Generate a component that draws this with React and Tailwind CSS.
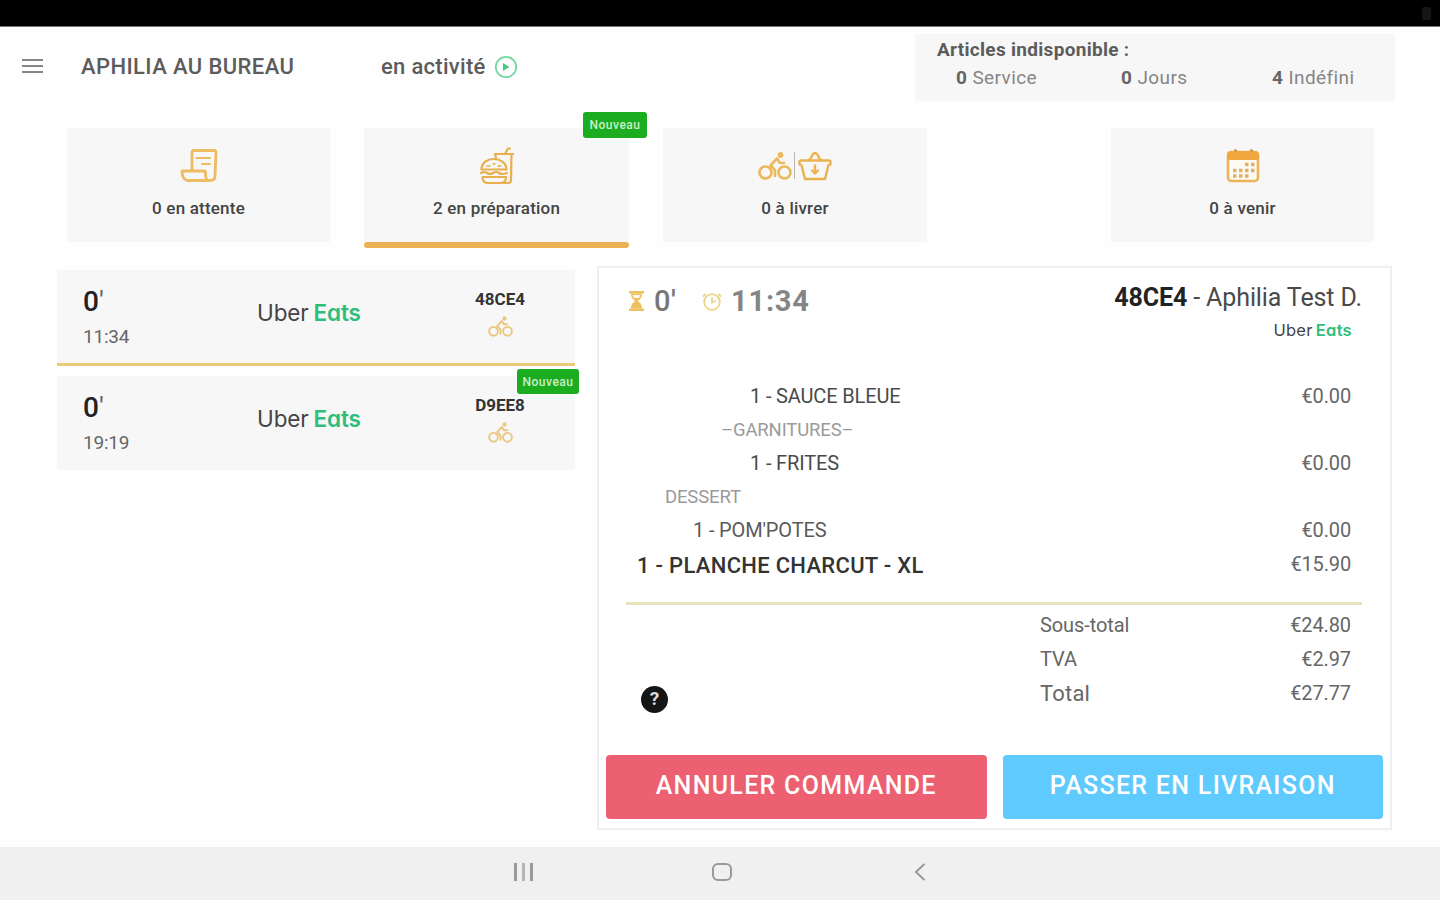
import { useState } from 'react';

const tabs = [
  { id: 'waiting', label: '0 en attente', icon: ScrollIcon, className: 'ml-[67px] w-[263px]' },
  { id: 'preparing', label: '2 en préparation', icon: BurgerIcon, className: 'ml-[34px] w-[265px]', isNew: true },
  { id: 'delivering', label: '0 à livrer', icon: DeliverIcon, className: 'ml-[34px] w-[264px]' },
  { id: 'coming', label: '0 à venir', icon: CalendarIcon, className: 'ml-[184px] w-[263px]' },
];

const orders = [
  { id: '48CE4', time: '11:34' },
  { id: 'D9EE8', time: '19:19', isNew: true },
];

const lines = [
  { text: '1 - SAUCE BLEUE', price: '€0.00', className: 'pl-[151px] text-[#4a4a4a]' },
  { text: '–GARNITURES–', className: 'pl-[122px] text-[18.500px] text-[#9a9a9a]' },
  { text: '1 - FRITES', price: '€0.00', className: 'pl-[151px] text-[#4a4a4a]' },
  { text: 'DESSERT', className: 'pl-[66px] text-[18.500px] text-[#9a9a9a]' },
  { text: "1 - POM'POTES", price: '€0.00', className: 'pl-[94px] text-[#5a5a5a]' },
];

function ScrollIcon() {
  return (
    <svg width="38" height="34" viewBox="0 0 38 34" fill="none" stroke="#edbb62" strokeWidth="2.8" strokeLinejoin="round" strokeLinecap="round">
      <path d="M12 21V3.500Q12 1.500 14 1.500H34Q36 1.500 36 4L35 27Q35 31.500 30 31.500H7Q2 30 2 22H24Q25.500 22 25.500 24Q25 29 28 31.500" />
      <path d="M16.500 9H30M22 15H30" strokeWidth="2.200" />
    </svg>
  );
}

function BurgerIcon() {
  return (
    <svg width="36" height="38" viewBox="0 0 36 38" fill="none" stroke="#e9af4c" strokeWidth="2.200" strokeLinejoin="round" strokeLinecap="round">
      <path d="M2.500 22.500C2.500 8.500 27 8.500 27.500 22.500Z" />
      <path d="M2 26Q5 24 8 26T14 26T20 26T28 26" />
      <path d="M3.500 30H27Q27 36 22 36H9Q3.500 36 3.500 30Z" />
      <path d="M17 11L16 7H34M32.500 7L32 33Q32 36 29 36H25M26 7L29 1.500H31" />
      <path d="M8 19H11M14 17H16M19 19H22" strokeWidth="1.600" />
    </svg>
  );
}

function BikeIcon({ width, height, strokeWidth = 2.6, color = '#ecb85c' }) {
  return (
    <svg width={width} height={height} viewBox="0 0 34 28" fill="none" stroke={color} strokeWidth={strokeWidth} strokeLinejoin="round" strokeLinecap="round">
      <circle cx="7.500" cy="20.500" r="6" />
      <circle cx="26.500" cy="20.500" r="6" />
      <path d="M17 24V18L12.500 13.500L19 6.500L22 11H26" />
      <circle cx="22.500" cy="3" r="1.600" />
    </svg>
  );
}

function BasketIcon() {
  return (
    <svg width="34" height="30" viewBox="0 0 34 30" fill="none" stroke="#ecb252" strokeWidth="2.400" strokeLinejoin="round" strokeLinecap="round">
      <path d="M3.500 14L7 28H27L30.500 14" />
      <path d="M1.500 13.500V11Q1.500 9.500 3 9.500H31Q32.500 9.500 32.500 11V13.500" />
      <path d="M10.500 9Q13 8 14 4.500Q17 -0.500 20 4.500Q21 8 23.500 9" />
      <path d="M17 14.500V22M14 19.500L17 22.500L20 19.500" />
    </svg>
  );
}

function DeliverIcon() {
  return (
    <div className="flex items-center">
      <BikeIcon width={34} height={28} />
      <div className="mr-[3px] ml-[2px] h-[27px] w-px bg-[#b5b5b5]" />
      <BasketIcon />
    </div>
  );
}

function CalendarIcon() {
  return (
    <svg width="34" height="34" viewBox="0 0 34 34" fill="none">
      <rect x="2" y="3" width="30" height="29" rx="3.500" fill="#fdfaf3" stroke="#edb559" strokeWidth="2.600" />
      <path d="M1 11V6Q1 2 5 2H29Q33 2 33 6V11Z" fill="#f1a640" />
      <path d="M8 1.500H11M24 1.500H27" stroke="#c99548" strokeWidth="2" />
      <path d="M19 15.500H29M19 21.500H29M7 21.500H17M7 27H23" stroke="#dfb267" strokeWidth="3.500" strokeDasharray="3.500 2.500" />
    </svg>
  );
}

function NewBadge({ className }) {
  return (
    <span className={`absolute flex items-center justify-center rounded-[3px] bg-[#1bac1f] text-[12px] font-medium tracking-[0.500px] text-[#c9f0c9] ${className}`}>
      Nouveau
    </span>
  );
}

function UberEats({ className }) {
  return (
    <span className={`font-['Inter','Liberation_Sans',sans-serif] leading-none whitespace-nowrap [font-feature-settings:'cv11'] ${className}`}>
      <span className="text-[#444]">Uber</span> <span className="font-semibold text-[#2fbd7c]">Eats</span>
    </span>
  );
}

function Header() {
  return (
    <header className="flex h-[74px] shrink-0 items-start text-[#5c5c5c]">
      <div className="mt-[32px] ml-[22px] flex w-[21px] flex-col gap-[4px]">
        <div className="h-[2px] bg-[#858585]" />
        <div className="h-[2px] bg-[#858585]" />
        <div className="h-[2px] bg-[#858585]" />
      </div>
      <h1 className="mt-[26px] ml-[38px] w-[300px] text-[22px] leading-[28px] font-medium tracking-[0.400px]">APHILIA AU BUREAU</h1>
      <div className="mt-[26px] flex w-[534px] items-center gap-[8px] text-[22px] leading-[28px] font-medium tracking-[0.300px]">
        en activité
        <svg width="24" height="24" viewBox="0 0 24 24" fill="none">
          <circle cx="12" cy="12" r="10.200" stroke="#72d8a2" strokeWidth="1.800" />
          <path d="M9 8L15.500 12L9 16Z" fill="#41cb83" />
        </svg>
      </div>
      <div className="mt-[7px] h-[67px] w-[480px] bg-[#f7f7f7] pt-[3px]">
        <p className="pl-[22px] text-[19px] leading-[26px] font-bold tracking-[0.300px]">Articles indisponible :</p>
        <div className="flex text-[19px] leading-[30px] tracking-[0.400px] text-[#858585]">
          <span className="ml-[41px] w-[165px]"><b className="text-[#666]">0</b> Service</span>
          <span className="w-[151px]"><b className="text-[#666]">0</b> Jours</span>
          <span><b className="text-[#666]">4</b> Indéfini</span>
        </div>
      </div>
    </header>
  );
}

function OrderRow({ order, selected, onSelect }) {
  return (
    <button
      onClick={() => onSelect(order.id)}
      className={`relative flex w-[518px] bg-[#f7f7f7] text-left ${selected ? 'h-[96px] border-b-[3px] border-[#e9cb7c]' : 'h-[94px]'}`}
    >
      <div className="w-[200px] pt-[16px] pl-[26px]">
        <p className="text-[28px] leading-[32px] font-medium text-[#222]">0<span className="font-normal text-[#666]">'</span></p>
        <p className="mt-[6px] text-[19px] leading-[26px] tracking-[-0.200px] text-[#666]">{order.time}</p>
      </div>
      <div className="pt-[32px]">
        <UberEats className="text-[22.500px] tracking-[-0.100px] [word-spacing:-1.500px]" />
      </div>
      <div className="absolute top-0 right-[25px] flex w-[100px] flex-col items-center pt-[18px]">
        <p className="text-[17px] leading-[22px] font-bold text-[#333]">{order.id}</p>
        <div className="mt-[6px]">
          <BikeIcon width={25} height={21} color="#eac67e" />
        </div>
      </div>
      {order.isNew && <NewBadge className="-top-[7px] -right-[4px] h-[25px] w-[62px]" />}
    </button>
  );
}

function OrderDetails() {
  return (
    <section className="ml-[22px] flex h-[564px] w-[795px] flex-col border-2 border-[#efefef] bg-white">
      <div className="flex h-[112px] items-start">
        <svg className="mt-[23px] ml-[29px]" width="17" height="20" viewBox="0 0 17 20" fill="#efc05d">
          <path d="M1 0H16V2.500H1ZM1 17.500H16V20H1Z" />
          <path d="M3 2.500H14C14 7 12 8 10 10C12 12 14 13 14 17.500H3C3 13 5 12 7 10C5 8 3 7 3 2.500Z" />
          <path d="M4.500 4H12.500L11 7H6Z" fill="#fffaf0" />
        </svg>
        <p className="ml-[9px] w-[48px] pt-[14px] text-[29px] leading-[38px] font-medium tracking-[0.500px] text-[#777]">0'</p>
        <svg className="mt-[24px]" width="20" height="20" viewBox="0 0 20 20" fill="none" stroke="#ead586" strokeWidth="1.800" strokeLinecap="round">
          <circle cx="10" cy="10" r="7.800" />
          <path d="M10 6V10.500L13 9M3 2.500L1.500 4M17 2.500L18.500 4" />
        </svg>
        <p className="ml-[9px] pt-[14px] text-[29px] leading-[38px] font-bold tracking-[0.800px] text-[#858585]">11:34</p>
        <div className="ml-auto flex flex-col items-end pt-[14px] pr-[28px]">
          <p className="text-[25px] leading-[32px] tracking-[-0.120px] text-[#4a4a4a]"><b className="text-[#222]">48CE4</b> - Aphilia Test D.</p>
          <UberEats className="mt-[8px] mr-[10px] text-[16.500px] tracking-[0.300px] [word-spacing:-2px]" />
        </div>
      </div>

      <div className="text-[20px] leading-[33.500px] tracking-[-0.150px]">
        {lines.map((line) => (
          <div key={line.text} className={`flex h-[33.500px] justify-between pr-[39px] leading-[33.500px] ${line.className}`}>
            <span>{line.text}</span>
            <span className="text-[#666]">{line.price}</span>
          </div>
        ))}
        <div className="flex h-[38px] justify-between pr-[39px] pl-[38px]">
          <span className="text-[22px] leading-[36px] font-medium tracking-[0.300px] text-[#333]">1 - PLANCHE CHARCUT - XL</span>
          <span className="text-[#666]">€15.90</span>
        </div>
      </div>

      <div className="mt-[16px] mr-[28px] ml-[27px] h-[3px] bg-[#e6e4bd]" />

      <div className="flex">
        <div className="mt-[81px] ml-[42px] flex size-[27px] items-center justify-center rounded-full bg-[#151515] text-[19px] font-bold text-[#ddd]">?</div>
        <div className="ml-auto w-[311px] pt-[3px] text-[20px] leading-[34px] tracking-[-0.100px] text-[#666]">
          <div className="flex justify-between"><span>Sous-total</span><span>€24.80</span></div>
          <div className="flex justify-between"><span>TVA</span><span>€2.97</span></div>
          <div className="flex justify-between"><span className="pt-[1px] text-[22px] tracking-[0.200px]">Total</span><span>€27.77</span></div>
        </div>
        <div className="w-[39px] shrink-0" />
      </div>

      <div className="mt-auto flex gap-[16px] px-[7px] pb-[9px] text-[25px] font-medium tracking-[1.300px] text-white">
        <button className="h-[64px] flex-1 rounded-[4px] bg-[#ed6072] pb-[2px]">ANNULER COMMANDE</button>
        <button className="h-[64px] flex-1 rounded-[4px] bg-[#5ecafd] pb-[2px]">PASSER EN LIVRAISON</button>
      </div>
    </section>
  );
}

function App() {
  const [activeTab, setActiveTab] = useState('preparing');
  const [selectedOrder, setSelectedOrder] = useState('48CE4');

  return (
    <div className="flex h-screen w-full flex-col overflow-hidden bg-[#fefefe] font-['Roboto','Liberation_Sans',sans-serif]">
      <div className="flex h-[27px] shrink-0 justify-end border-b border-[#777] bg-black pt-[7px] pr-[9px]">
        <div className="h-[13px] w-[9px] rounded-[2px] bg-[#151515]" />
      </div>

      <Header />

      <nav className="mt-[27px] flex h-[120px] shrink-0">
        {tabs.map(({ id, label, icon: Icon, className, isNew }) => (
          <button
            key={id}
            onClick={() => setActiveTab(id)}
            className={`relative flex h-[114px] flex-col items-center bg-[#f7f7f7] ${className}`}
          >
            <div className="mt-[19px] flex h-[37px] items-center justify-center"><Icon /></div>
            <span className="mt-[12px] text-[17px] leading-[24px] font-medium tracking-[0.200px] text-[#444]">{label}</span>
            {activeTab === id && <div className="mt-[22px] h-[6px] w-full shrink-0 rounded-[3px] bg-[#ebb154]" />}
            {isNew && <NewBadge className="-top-[16px] -right-[18px] h-[26px] w-[64px]" />}
          </button>
        ))}
      </nav>

      <main className="mt-[18px] flex flex-1 items-start pl-[57px]">
        <div className="flex flex-col gap-[10px] pt-[4px]">
          {orders.map((order) => (
            <OrderRow key={order.id} order={order} selected={order.id === selectedOrder} onSelect={setSelectedOrder} />
          ))}
        </div>
        <OrderDetails />
      </main>

      <footer className="flex h-[53px] shrink-0 items-center bg-[#f0f0f0] pb-[3px]">
        <div className="ml-[514px] flex w-[198px] gap-[5px]">
          <div className="h-[18px] w-[3px] bg-[#999]" />
          <div className="h-[18px] w-[3px] bg-[#b5b5b5]" />
          <div className="h-[18px] w-[3px] bg-[#999]" />
        </div>
        <div className="h-[18px] w-[20px] rounded-[6px] border-2 border-[#999]" />
        <svg className="ml-[182px]" width="12" height="18" viewBox="0 0 12 18" fill="none" stroke="#999" strokeWidth="2">
          <path d="M10.500 1L2 9L10.500 17" />
        </svg>
      </footer>
    </div>
  );
}

export default App;
